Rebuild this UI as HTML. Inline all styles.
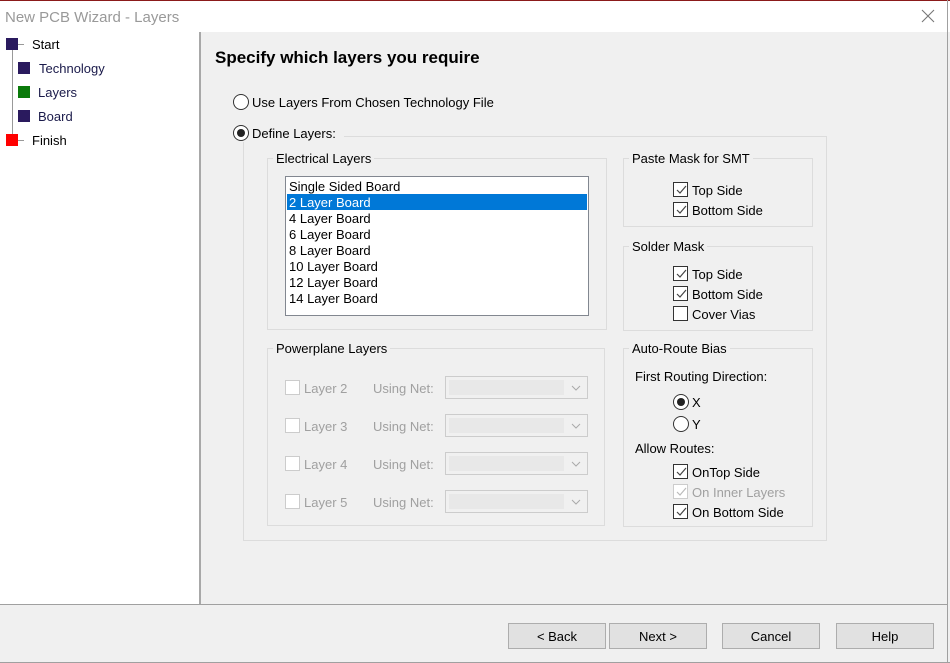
<!DOCTYPE html>
<html><head><style>
*{margin:0;padding:0;box-sizing:border-box}
body{width:950px;height:663px;position:relative;background:#f0f0f0;font-family:"Liberation Sans",sans-serif;font-size:13px;color:#000;overflow:hidden}
.a{position:absolute;white-space:nowrap;line-height:16px;margin-top:1px}
.g{position:absolute;border:1px solid #dcdcdc}
.gl{position:absolute;background:#f0f0f0;padding:0 3px;line-height:16px;white-space:nowrap;margin-top:1px}
.cb{position:absolute;width:15px;height:15px;border:1px solid #333;background:#fff}
.cb.d{border-color:#ccc}
.cb svg{position:absolute;left:1px;top:1px}
.rb{position:absolute;width:16px;height:16px;border:1px solid #333;border-radius:50%;background:#fff}
.rb.on::after{content:"";position:absolute;left:3px;top:3px;width:8px;height:8px;border-radius:50%;background:#222}
.dis{color:#a0a0a0}
.dd{position:absolute;width:143px;height:23px;border:1px solid #ccc;background:#f0f0f0}
.dd::before{content:"";position:absolute;left:3px;top:3px;width:115px;height:15px;background:#e8e8e8}
.dd svg{position:absolute;right:6px;top:8px}
.btn{position:absolute;height:26px;border:1px solid #adadad;background:#e1e1e1;text-align:center;line-height:25px}
.sq{position:absolute;width:12px;height:12px}
</style></head><body>
<div style="position:absolute;left:0;top:0;width:950px;height:32px;background:#fff;border-top:1px solid #8b1a1a"></div>
<div style="position:absolute;right:2px;top:0;width:1px;height:663px;background:#a0a0a0"></div>
<div class="a" style="left:5px;top:8px;font-size:15px;line-height:18px;color:#999">New PCB Wizard - Layers</div>
<svg style="position:absolute;left:921px;top:9px" width="14" height="14"><path d="M1 1L13 13M13 1L1 13" stroke="#777" stroke-width="1.1"/></svg>
<div style="position:absolute;left:0;top:32px;width:201px;height:572px;background:#fff;border-right:2px solid #a8a8a8"></div>
<div style="position:absolute;left:12px;top:44px;width:1px;height:97px;background:#999"></div>
<div style="position:absolute;left:12px;top:44px;width:12px;height:1px;background:#999"></div>
<div style="position:absolute;left:12px;top:140px;width:12px;height:1px;background:#999"></div>
<div class="sq" style="left:6px;top:38px;background:#2a1a5e"></div>
<div class="sq" style="left:18px;top:62px;background:#2a1a5e"></div>
<div class="sq" style="left:18px;top:86px;background:#0a7a0a"></div>
<div class="sq" style="left:18px;top:110px;background:#2a1a5e"></div>
<div class="sq" style="left:6px;top:134px;background:#f00"></div>
<div class="a" style="left:32px;top:36px">Start</div>
<div class="a" style="left:39px;top:60px;color:#1a1a4a">Technology</div>
<div class="a" style="left:38px;top:84px;color:#1a1a4a">Layers</div>
<div class="a" style="left:38px;top:108px;color:#1a1a4a">Board</div>
<div class="a" style="left:32px;top:132px">Finish</div>
<div class="a" style="left:215px;top:47px;font-size:17px;line-height:20px;font-weight:bold">Specify which layers you require</div>
<div class="rb" style="left:233px;top:94px"></div>
<div class="a" style="left:252px;top:94px">Use Layers From Chosen Technology File</div>
<div class="g" style="left:243px;top:136px;width:584px;height:405px"></div>
<div class="gl" style="left:231px;top:124px;padding:0 8px 0 2px"><span class="rb on" style="position:relative;display:inline-block;vertical-align:-3px;margin-right:3px"></span>Define Layers:</div>
<div class="g" style="left:267px;top:158px;width:340px;height:172px"></div>
<div class="gl" style="left:273px;top:150px">Electrical Layers</div>
<div style="position:absolute;left:285px;top:176px;width:304px;height:140px;background:#fff;border:1px solid #828790"></div>
<div style="position:absolute;left:287px;top:194px;width:300px;height:16px;background:#0078d7"></div>
<div class="a" style="left:289px;top:178px">Single Sided Board</div>
<div class="a" style="left:289px;top:194px;color:#fff">2 Layer Board</div>
<div class="a" style="left:289px;top:210px">4 Layer Board</div>
<div class="a" style="left:289px;top:226px">6 Layer Board</div>
<div class="a" style="left:289px;top:242px">8 Layer Board</div>
<div class="a" style="left:289px;top:258px">10 Layer Board</div>
<div class="a" style="left:289px;top:274px">12 Layer Board</div>
<div class="a" style="left:289px;top:290px">14 Layer Board</div>
<div class="g" style="left:623px;top:158px;width:190px;height:69px"></div>
<div class="gl" style="left:629px;top:150px">Paste Mask for SMT</div>
<div class="cb" style="left:673px;top:182px"><svg width="12" height="12"><path d="M2 6L5 9L11 2" stroke="#444" fill="none" stroke-width="1.2"/></svg></div>
<div class="a" style="left:692px;top:182px">Top Side</div>
<div class="cb" style="left:673px;top:202px"><svg width="12" height="12"><path d="M2 6L5 9L11 2" stroke="#444" fill="none" stroke-width="1.2"/></svg></div>
<div class="a" style="left:692px;top:202px">Bottom Side</div>
<div class="g" style="left:623px;top:246px;width:190px;height:85px"></div>
<div class="gl" style="left:629px;top:238px">Solder Mask</div>
<div class="cb" style="left:673px;top:266px"><svg width="12" height="12"><path d="M2 6L5 9L11 2" stroke="#444" fill="none" stroke-width="1.2"/></svg></div>
<div class="a" style="left:692px;top:266px">Top Side</div>
<div class="cb" style="left:673px;top:286px"><svg width="12" height="12"><path d="M2 6L5 9L11 2" stroke="#444" fill="none" stroke-width="1.2"/></svg></div>
<div class="a" style="left:692px;top:286px">Bottom Side</div>
<div class="cb" style="left:673px;top:306px"></div>
<div class="a" style="left:692px;top:306px">Cover Vias</div>
<div class="g" style="left:267px;top:348px;width:338px;height:178px"></div>
<div class="gl" style="left:273px;top:340px">Powerplane Layers</div>
<div class="cb d" style="left:285px;top:380px"></div><div class="a dis" style="left:304px;top:380px">Layer 2</div><div class="a dis" style="left:373px;top:380px">Using Net:</div>
<div class="dd" style="left:445px;top:376px"><svg width="10" height="6"><path d="M1 1L5 5L9 1" stroke="#aaa" fill="none"/></svg></div>
<div class="cb d" style="left:285px;top:418px"></div><div class="a dis" style="left:304px;top:418px">Layer 3</div><div class="a dis" style="left:373px;top:418px">Using Net:</div>
<div class="dd" style="left:445px;top:414px"><svg width="10" height="6"><path d="M1 1L5 5L9 1" stroke="#aaa" fill="none"/></svg></div>
<div class="cb d" style="left:285px;top:456px"></div><div class="a dis" style="left:304px;top:456px">Layer 4</div><div class="a dis" style="left:373px;top:456px">Using Net:</div>
<div class="dd" style="left:445px;top:452px"><svg width="10" height="6"><path d="M1 1L5 5L9 1" stroke="#aaa" fill="none"/></svg></div>
<div class="cb d" style="left:285px;top:494px"></div><div class="a dis" style="left:304px;top:494px">Layer 5</div><div class="a dis" style="left:373px;top:494px">Using Net:</div>
<div class="dd" style="left:445px;top:490px"><svg width="10" height="6"><path d="M1 1L5 5L9 1" stroke="#aaa" fill="none"/></svg></div>
<div class="g" style="left:623px;top:348px;width:190px;height:179px"></div>
<div class="gl" style="left:629px;top:340px">Auto-Route Bias</div>
<div class="a" style="left:635px;top:368px">First Routing Direction:</div>
<div class="rb on" style="left:673px;top:394px"></div><div class="a" style="left:692px;top:394px">X</div>
<div class="rb" style="left:673px;top:416px"></div><div class="a" style="left:692px;top:416px">Y</div>
<div class="a" style="left:635px;top:440px">Allow Routes:</div>
<div class="cb" style="left:673px;top:464px"><svg width="12" height="12"><path d="M2 6L5 9L11 2" stroke="#444" fill="none" stroke-width="1.2"/></svg></div>
<div class="a" style="left:692px;top:464px">OnTop Side</div>
<div class="cb d" style="left:673px;top:484px"><svg width="12" height="12"><path d="M2 6L5 9L11 2" stroke="#bbb" fill="none" stroke-width="1.2"/></svg></div>
<div class="a dis" style="left:692px;top:484px">On Inner Layers</div>
<div class="cb" style="left:673px;top:504px"><svg width="12" height="12"><path d="M2 6L5 9L11 2" stroke="#444" fill="none" stroke-width="1.2"/></svg></div>
<div class="a" style="left:692px;top:504px">On Bottom Side</div>
<div style="position:absolute;left:0;top:604px;width:947px;height:1px;background:#a0a0a0"></div>
<div style="position:absolute;left:0;top:662px;width:950px;height:1px;background:#a0a0a0"></div>
<div class="btn" style="left:508px;top:623px;width:98px">&lt; Back</div>
<div class="btn" style="left:609px;top:623px;width:98px">Next &gt;</div>
<div class="btn" style="left:722px;top:623px;width:98px">Cancel</div>
<div class="btn" style="left:836px;top:623px;width:98px">Help</div>
</body></html>
